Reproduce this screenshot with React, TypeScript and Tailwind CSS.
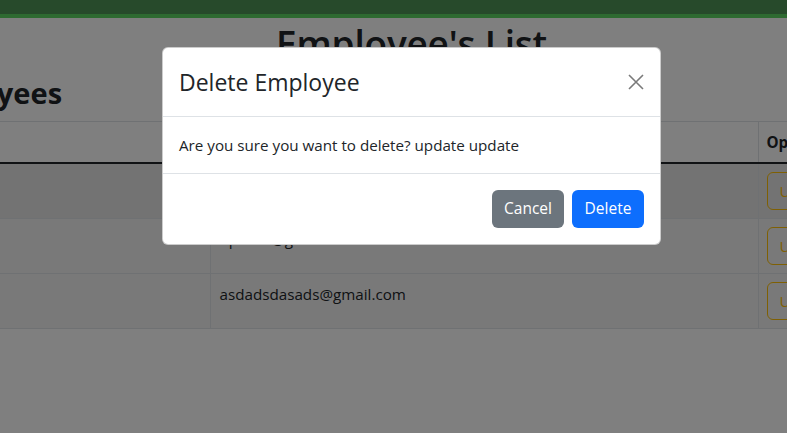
interface Employee {
  id: number;
  name: string;
  email: string;
}

const employees: Employee[] = [
  { id: 1, name: 'update update', email: 'updateupdate@gmail.com' },
  { id: 2, name: 'hpdsds', email: 'hpdsds@gmail.com' },
  { id: 3, name: 'asdads', email: 'asdadsdasads@gmail.com' },
];

const rowBg = ['bg-[#e7e7e7]', 'bg-[#f3f3f3]', 'bg-[#f3f3f3]'];

export default function App() {
  return (
    <div
      className="relative h-[433px] w-full overflow-hidden bg-white text-[#212529]"
      style={{ fontFamily: '"Segoe UI", "Open Sans", "Noto Sans", sans-serif' }}
    >
      {/* Navbar */}
      <div className="h-[18px] bg-[#4e9456] border-b-4 border-[#5dd462]" />

      {/* Page */}
      <div className="flex justify-center pl-[36px]">
        <h1 className="text-[37px] font-semibold leading-[1.2] mt-[4px] tracking-[-0.2px]">Employee's List</h1>
      </div>

      <div className="ml-[-92px] w-[1100px]">
        <h2 className="text-[29px] font-bold leading-[1.2] mt-[10px] mb-[10px] -ml-[1px]">Employees</h2>

        <table className="border-collapse text-[15.2px] leading-6">
          <thead>
            <tr className="border-t border-[#dee2e6] border-b-2 border-b-[#212529]">
              <th className="w-[302px] px-2 py-2 text-left font-bold">Id</th>
              <th className="w-[548px] px-2 py-2 text-left font-bold border-l border-[#dee2e6]">Email</th>
              <th className="w-[250px] px-2 py-2 text-left font-bold border-l border-[#dee2e6]">Operations</th>
            </tr>
          </thead>
          <tbody>
            {employees.map((emp, i) => (
              <tr key={emp.id} className={`border-b border-[#dee2e6] ${rowBg[i]}`}>
                <td className="px-2 py-2 align-top">{emp.id}</td>
                <td className="pl-[9px] pr-2 py-2 align-top border-l border-[#dee2e6]">{emp.email}</td>
                <td className="px-2 py-2 align-top border-l border-[#dee2e6]">
                  <button className="h-[38px] px-3 rounded-md border border-[#ffc107] text-[#ffc107]">
                    Update
                  </button>
                </td>
              </tr>
            ))}
          </tbody>
        </table>
      </div>

      {/* Backdrop */}
      <div className="absolute inset-0 bg-black/50" />

      {/* Modal */}
      <div className="absolute left-[162px] top-[47px] w-[499px] bg-white rounded-md border border-black/20">
        <div className="flex items-center justify-between pl-4 pr-4 py-4 border-b border-[#dee2e6]">
          <h3 className="text-[23px] font-medium leading-9">Delete Employee</h3>
          <button className="w-4 h-4 flex items-center justify-center text-[#7a7a7a]">
            <svg viewBox="0 0 16 16" className="w-4 h-4" fill="none" stroke="currentColor" strokeWidth={1.6}>
              <path d="M1 1L15 15M15 1L1 15" />
            </svg>
          </button>
        </div>
        <div className="px-4 py-4 border-b border-[#dee2e6]">
          <p className="text-[15.2px] leading-6">Are you sure you want to delete? update update</p>
        </div>
        <div className="flex justify-end gap-2 px-4 py-4">
          <button className="h-[38px] w-[72px] rounded-md bg-[#6c757d] text-white text-[15.5px]">Cancel</button>
          <button className="h-[38px] w-[72px] rounded-md bg-[#0d6efd] text-white text-[15.5px]">Delete</button>
        </div>
      </div>
    </div>
  );
}
